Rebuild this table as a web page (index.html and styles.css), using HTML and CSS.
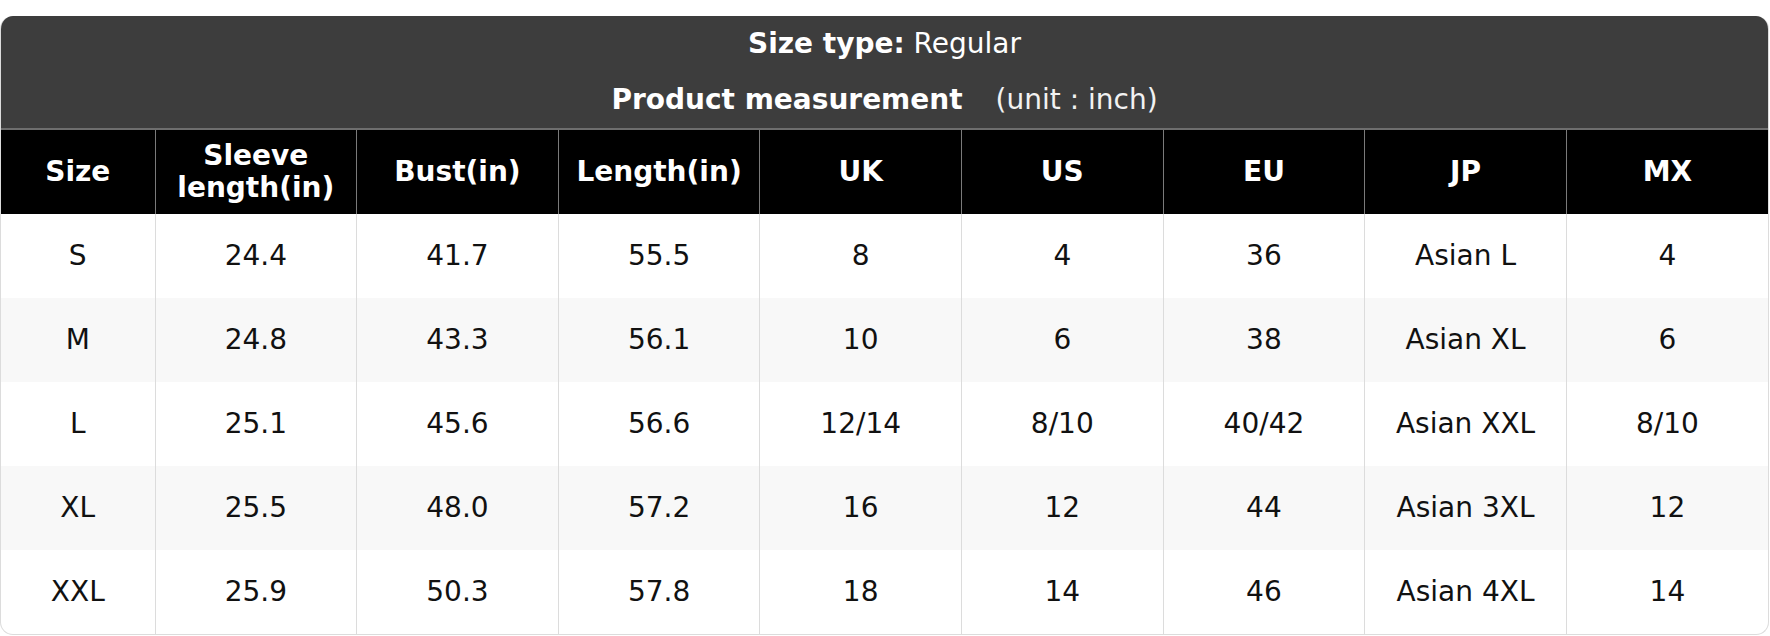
FILE: index.html
```html
<!DOCTYPE html>
<html lang="en">
<head>
<meta charset="utf-8">
<title>Size chart</title>
<link rel="stylesheet" href="styles.css">
</head>
<body>
<div class="chart">
  <div class="chart-title">
    <div class="title-line"><b>Size type:</b> Regular</div>
    <div class="title-line"><b>Product measurement</b><span class="unit">(unit : inch)</span></div>
  </div>
  <table class="size-table">
    <colgroup>
      <col class="col-first">
      <col><col><col><col><col><col><col><col>
    </colgroup>
    <thead>
      <tr>
        <th>Size</th>
        <th>Sleeve<br>length(in)</th>
        <th>Bust(in)</th>
        <th>Length(in)</th>
        <th>UK</th>
        <th>US</th>
        <th>EU</th>
        <th>JP</th>
        <th>MX</th>
      </tr>
    </thead>
    <tbody>
      <tr><td>S</td><td>24.4</td><td>41.7</td><td>55.5</td><td>8</td><td>4</td><td>36</td><td>Asian L</td><td>4</td></tr>
      <tr><td>M</td><td>24.8</td><td>43.3</td><td>56.1</td><td>10</td><td>6</td><td>38</td><td>Asian XL</td><td>6</td></tr>
      <tr><td>L</td><td>25.1</td><td>45.6</td><td>56.6</td><td>12/14</td><td>8/10</td><td>40/42</td><td>Asian XXL</td><td>8/10</td></tr>
      <tr><td>XL</td><td>25.5</td><td>48.0</td><td>57.2</td><td>16</td><td>12</td><td>44</td><td>Asian 3XL</td><td>12</td></tr>
      <tr><td>XXL</td><td>25.9</td><td>50.3</td><td>57.8</td><td>18</td><td>14</td><td>46</td><td>Asian 4XL</td><td>14</td></tr>
    </tbody>
  </table>
</div>
</body>
</html>
```
FILE: styles.css
```css
html, body {
  margin: 0;
  padding: 0;
  background: #ffffff;
}

body {
  font-family: "DejaVu Sans", "Liberation Sans", sans-serif;
  font-size: 28px;
  color: #111111;
}

.chart {
  box-sizing: border-box;
  width: 1769px;
  margin-top: 16px;
  border: 1px solid #dcdcdc;
  border-top: none;
  border-radius: 13px;
  overflow: hidden;
}

.chart-title {
  background: #3d3d3d;
  color: #ffffff;
  text-align: center;
  padding: 11px 0 11px;
  display: flex;
  flex-direction: column;
  gap: 22px;
}

.title-line {
  line-height: 34px;
  height: 34px;
}

.title-line b {
  font-weight: bold;
}

.unit {
  margin-left: 33px;
  color: #f2f2f2;
}

.size-table {
  width: 100%;
  border-collapse: collapse;
  table-layout: fixed;
}

.col-first {
  width: 154px;
}

.size-table th {
  background: #000000;
  color: #ffffff;
  font-weight: bold;
  line-height: 32px;
  height: 85px;
  padding: 0 4px;
  box-sizing: border-box;
  border-top: 2px solid #6e6e6e;
  border-left: 1px solid #7a7a7a;
  text-align: center;
  vertical-align: middle;
}

.size-table th:first-child,
.size-table td:first-child {
  border-left: none;
}

.size-table td {
  height: 84px;
  box-sizing: border-box;
  padding: 0 4px;
  line-height: 32px;
  text-align: center;
  vertical-align: middle;
  border-left: 1px solid #dcdcdc;
  color: #111111;
}

.size-table tbody tr:nth-child(even) td {
  background: #f8f8f8;
}
```
